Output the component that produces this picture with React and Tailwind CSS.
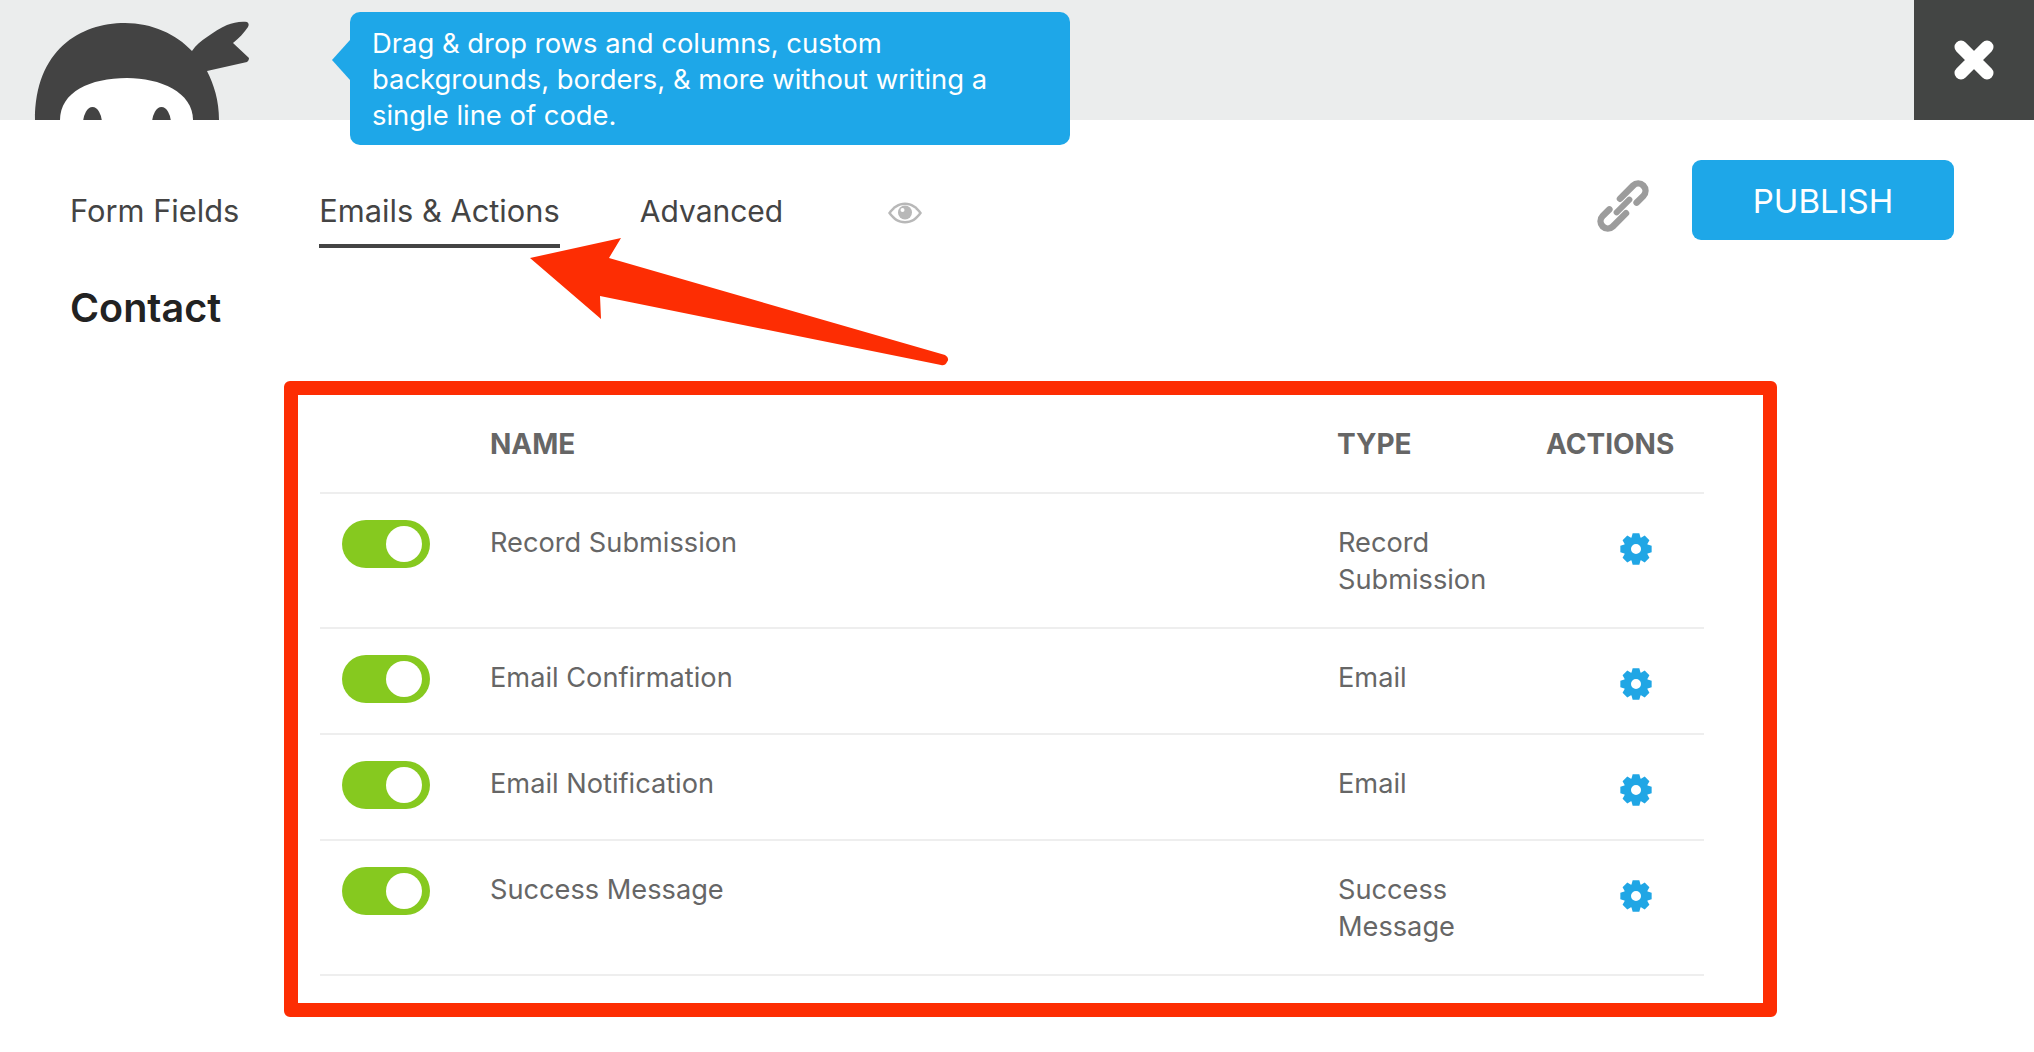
const SANS = "font-['Inter','Liberation_Sans',sans-serif]";

function gearPath() {
  // 8 tooth gear, outer r 16, root r 12.4, hole r 5 in a 32 box
  const pts = [];
  for (let i = 0; i < 8; i++) {
    const a = (i * Math.PI) / 4;
    const w = 0.21;
    const w2 = 0.27;
    [
      [12.4, a - w2 - 0.1],
      [16, a - w],
      [16, a + w],
      [12.4, a + w2 + 0.1],
    ].forEach(([r, t]) => pts.push([16 + r * Math.sin(t), 16 - r * Math.cos(t)]));
  }
  const outer = "M" + pts.map((p) => p[0].toFixed(2) + " " + p[1].toFixed(2)).join("L") + "Z";
  return outer + "M16 11a5 5 0 1 0 0 10a5 5 0 1 0 0-10Z";
}

const gear = gearPath();

const rows = [
  { name: "Record Submission", type: ["Record", "Submission"] },
  { name: "Email Confirmation", type: ["Email"] },
  { name: "Email Notification", type: ["Email"] },
  { name: "Success Message", type: ["Success", "Message"] },
];

function NinjaLogo() {
  return (
    <svg width="250" height="120" viewBox="0 0 250 120" className="block">
      <path
        d="M35 120C35 50 80 23 125 23C152 23 176 34 192 51C196 45 201 41 207 37C214 32 220 28 227 25C233 23 240 21 247 22C249 23 249 25 248 27C244 33 239 38 233 43L249 58C249 60 248 61 247 62L207 71C214 85 219 100 219 120Z"
        fill="#434343"
      />
      <path d="M60 120C60 92 90 78 127 78C160 78 193 92 193 120Z" fill="#fff" />
      <ellipse cx="92.5" cy="124" rx="9.5" ry="17" fill="#434343" />
      <ellipse cx="161.5" cy="124" rx="9.5" ry="17" fill="#434343" />
    </svg>
  );
}

function Toggle() {
  return (
    <div className="flex h-[48px] w-[88px] items-center justify-end rounded-full bg-[#86c91f] pr-[8px]">
      <div className="h-[36px] w-[36px] rounded-full bg-white" />
    </div>
  );
}

function Row({ row, tall }) {
  return (
    <div className={`flex border-b-2 border-[#eeeeee] ${tall ? "h-[135px]" : "h-[106px]"}`}>
      <div className="w-[170px] pl-[22px] pt-[26px]">
        <Toggle />
      </div>
      <div className="w-[848px] pt-[30px] text-[27.2px] leading-[37px] text-[#666666]">{row.name}</div>
      <div className="w-[210px] pt-[30px] text-[27.2px] leading-[37px] text-[#666666]">
        {row.type.map((t) => (
          <div key={t}>{t}</div>
        ))}
      </div>
      <div className="pl-[72px] pt-[39px]">
        <svg width="32" height="32" viewBox="0 0 32 32" className="block">
          <path d={gear} fill="#20a6e5" fillRule="evenodd" />
        </svg>
      </div>
    </div>
  );
}

export default function App() {
  return (
    <div className={`relative h-[1052px] w-[2034px] overflow-hidden bg-white ${SANS}`}>
      <div className="flex h-[120px] overflow-hidden bg-[#ebeded]">
        <NinjaLogo />
        <div className="ml-auto flex h-[120px] w-[120px] items-center justify-center bg-[#434544]">
          <svg width="42" height="42" viewBox="0 0 42 42">
            <path d="M8 8L34 34M34 8L8 34" stroke="#fff" strokeWidth="13" strokeLinecap="round" />
          </svg>
        </div>
      </div>

      {/* tooltip */}
      <div className="absolute left-[350px] top-[12px] h-[133px] w-[720px] rounded-[10px] bg-[#1ea7e8] px-[22px] py-[13px] text-[27.4px] leading-[36px] text-white">
        Drag &amp; drop rows and columns, custom
        <br />
        backgrounds, borders, &amp; more without writing a
        <br />
        single line of code.
        <div className="absolute left-[-18px] top-[28px] h-0 w-0 border-y-[20px] border-r-[18px] border-y-transparent border-r-[#1ea7e8]" />
      </div>

      <div className="flex h-[164px] items-start pl-[70px] pr-[80px] pt-[40px]">
        <div className="mr-[80px] pt-[30px] text-[30.8px] leading-[42px] text-[#444444]">Form Fields</div>
        <div className="mr-[80px] h-[88px] border-b-4 border-[#444444] pt-[30px] text-[30.8px] leading-[42px] text-[#444444]">
          Emails &amp; Actions
        </div>
        <div className="mr-[104px] pt-[30px] text-[30px] leading-[42px] text-[#444444]">Advanced</div>
        <svg width="36" height="24" viewBox="0 0 36 24" className="mt-[41px]">
          <path
            d="M1 12C6 5 11 1.5 18 1.5S30 5 35 12C30 19 25 22.5 18 22.5S6 19 1 12Z"
            fill="#b8b8b8"
          />
          <path d="M4 12C8 7 12 4 18 4S28 7 32 12C28 17 24 20 18 20S8 17 4 12Z" fill="#fff" />
          <circle cx="18" cy="11.5" r="7" fill="#b8b8b8" />
          <circle cx="15.5" cy="9" r="2" fill="#fff" />
        </svg>
        <svg width="52" height="52" viewBox="0 0 52 52" fill="none" className="ml-auto mr-[43px] mt-[20px]">
          <g stroke="#9c9c9c" transform="rotate(-45 26 26)">
            <path d="M29 18.75H47.5A7.25 7.25 0 0 1 47.5 33.25H38" strokeWidth="6.5" strokeLinecap="round" />
            <path d="M23 33.25H4.5A7.25 7.25 0 0 1 4.5 18.75H14" strokeWidth="6.5" strokeLinecap="round" />
            <path d="M17 26H35" strokeWidth="6" strokeLinecap="round" />
          </g>
        </svg>
        <button className="flex h-[80px] w-[262px] items-center justify-center rounded-[9px] bg-[#1ea7e8] pt-[4px] text-[33px] text-white">
          PUBLISH
        </button>
      </div>

      <div className="pl-[70px] text-[39.5px] font-semibold leading-[48px] text-[#222222]">Contact</div>

      <div className="ml-[284px] mt-[49px] h-[636px] w-[1493px] rounded-[6px] border-[14px] border-[#fd2d03] pl-[22px]">
        <div className="w-[1384px]">
          <div className="flex h-[99px] items-center border-b-2 border-[#eeeeee] text-[28px] font-bold text-[#666666]">
            <div className="ml-[170px] w-[847px]">NAME</div>
            <div className="w-[209px]">TYPE</div>
            <div>ACTIONS</div>
          </div>
          {rows.map((row) => (
            <Row key={row.name} row={row} tall={row.type.length > 1} />
          ))}
        </div>
      </div>

      {/* arrow annotation */}
      <svg width="2034" height="1052" viewBox="0 0 2034 1052" className="pointer-events-none absolute left-0 top-0">
        <path
          d="M530 258L621 238L609 258L945 355Q950 358 947 362Q945 366 941 365L600 296L601 319Z"
          fill="#fd2d03"
        />
      </svg>
    </div>
  );
}
